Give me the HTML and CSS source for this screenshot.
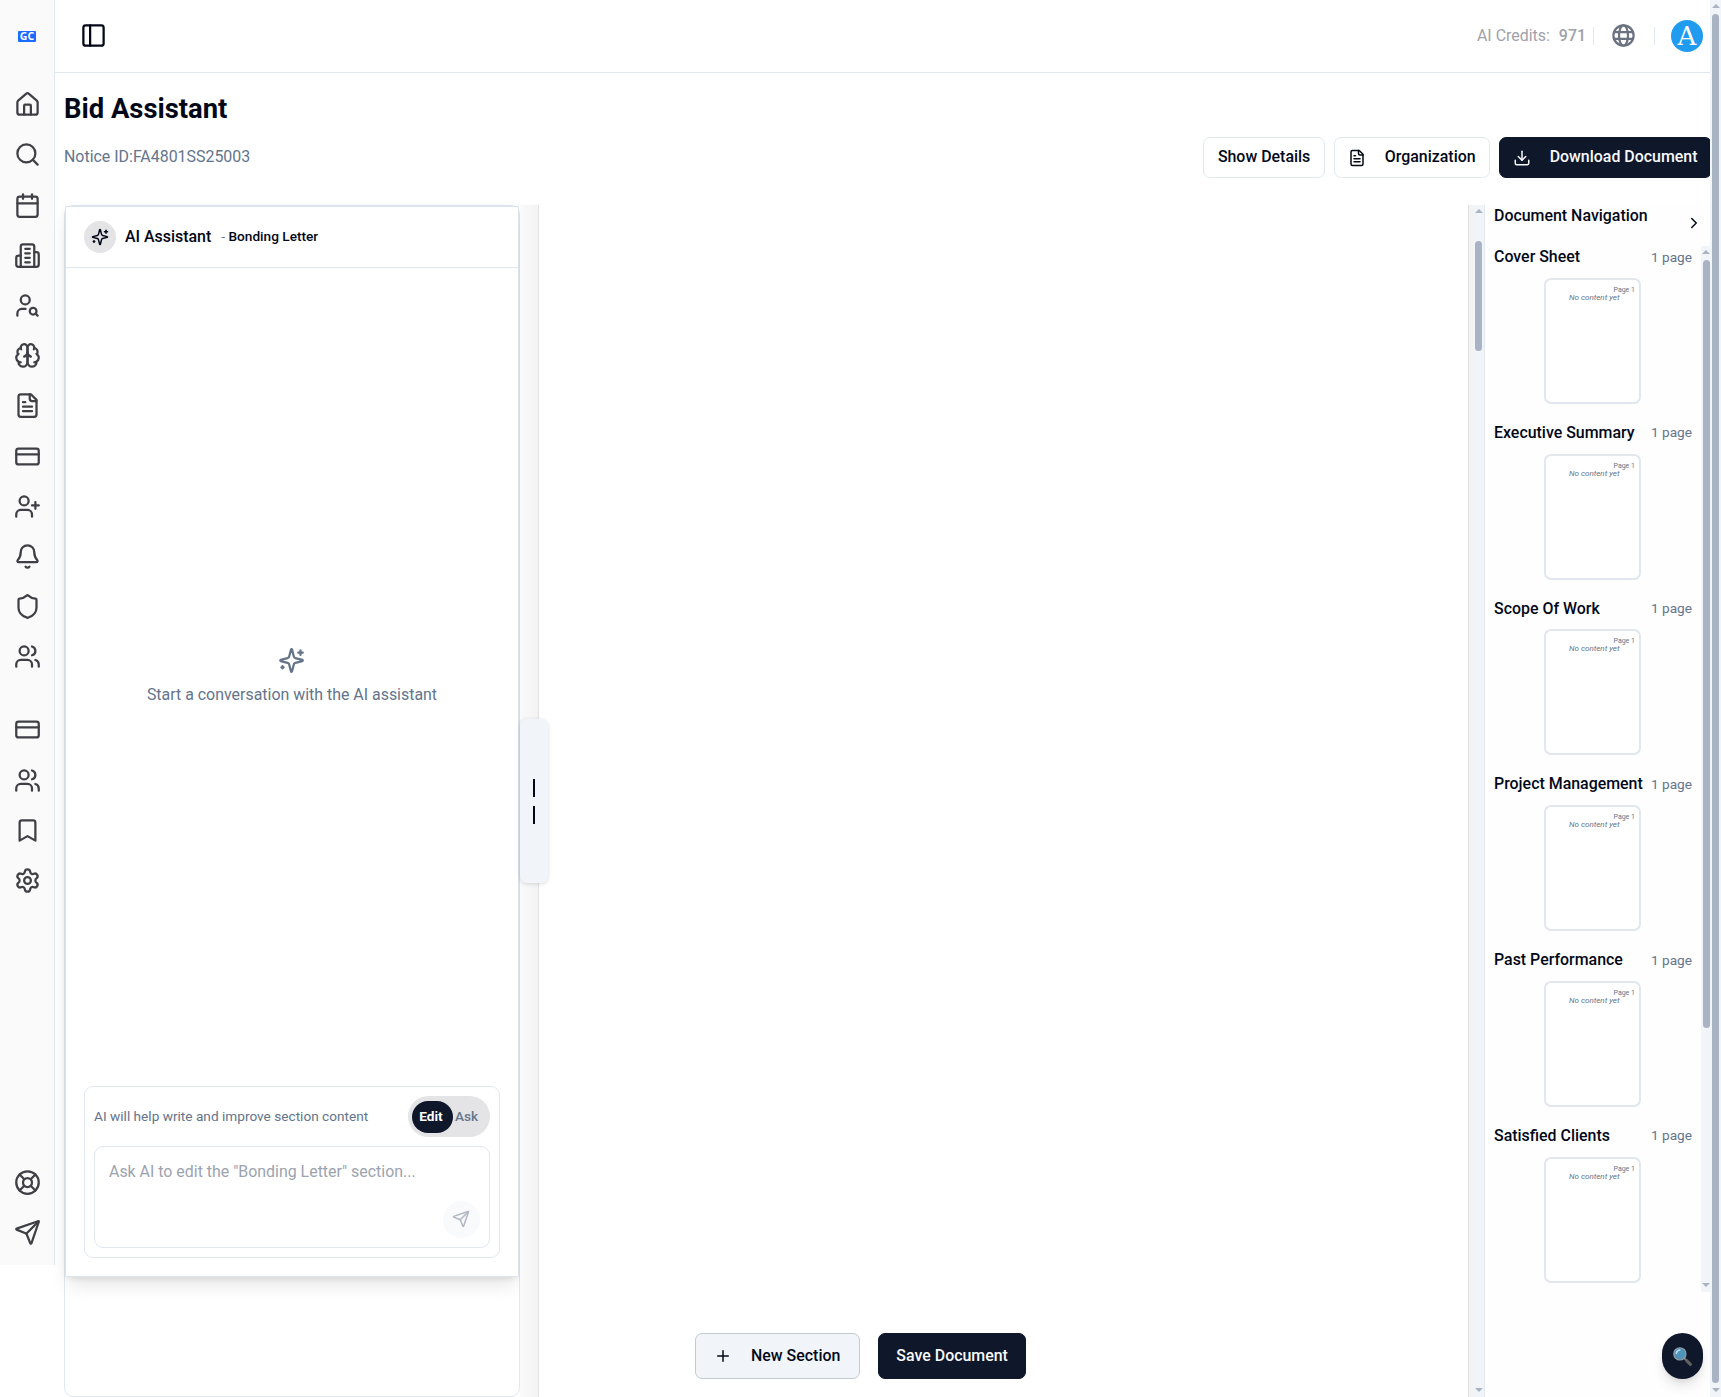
FILE: index.html
```
<!DOCTYPE html>
<html lang="en">
<head>
  <meta charset="UTF-8" />
  <meta name="viewport" content="width=device-width, initial-scale=1.0"/>
  <title>Bid Assistant</title>

  <link rel="stylesheet" href="styles.css">
</head>

<body>
  <!-- Shared icons -->
  <svg class="sprite" xmlns="http://www.w3.org/2000/svg">
    <symbol id="i-card" viewBox="0 0 24 24"><rect width="20" height="14" x="2" y="5" rx="2"/><path d="M2 10h20"/></symbol>
    <symbol id="i-users" viewBox="0 0 24 24"><path d="M16 21v-2a4 4 0 0 0-4-4H6a4 4 0 0 0-4 4v2"/><circle cx="9" cy="7" r="4"/><path d="M22 21v-2a4 4 0 0 0-3-3.87"/><path d="M16 3.13a4 4 0 0 1 0 7.75"/></symbol>
    <symbol id="i-file" viewBox="0 0 24 24"><path d="M15 2H6a2 2 0 0 0-2 2v16a2 2 0 0 0 2 2h12a2 2 0 0 0 2-2V7Z"/><path d="M14 2v4a2 2 0 0 0 2 2h4"/><path d="M10 9H8"/><path d="M16 13H8"/><path d="M16 17H8"/></symbol>
    <symbol id="i-send" viewBox="0 0 24 24"><path d="M14.536 21.686a.5.5 0 0 0 .937-.024l6.5-19a.496.496 0 0 0-.635-.635l-19 6.5a.5.5 0 0 0-.024.937l7.93 3.18a2 2 0 0 1 1.112 1.11z"/><path d="m21.854 2.147-10.94 10.939"/></symbol>
    <symbol id="i-sparkles" viewBox="0 0 24 24"><path d="M9.937 15.5A2 2 0 0 0 8.5 14.063l-6.135-1.582a.5.5 0 0 1 0-.962L8.5 9.936A2 2 0 0 0 9.937 8.5l1.582-6.135a.5.5 0 0 1 .963 0L14.063 8.5A2 2 0 0 0 15.5 9.937l6.135 1.581a.5.5 0 0 1 0 .964L15.5 14.063a2 2 0 0 0-1.437 1.437l-1.582 6.135a.5.5 0 0 1-.963 0z"/><path d="M20 3v4"/><path d="M22 5h-4"/><path d="M4 17v2"/><path d="M5 18H3"/></symbol>
  </svg>

  <aside class="sidebar">
    <div class="logo"><span>GC</span></div>
    <nav class="side-group">
      <a><svg class="icon" viewBox="0 0 24 24"><path d="M15 21v-8a1 1 0 0 0-1-1h-4a1 1 0 0 0-1 1v8"/><path d="M3 10a2 2 0 0 1 .709-1.528l7-5.999a2 2 0 0 1 2.582 0l7 5.999A2 2 0 0 1 21 10v9a2 2 0 0 1-2 2H5a2 2 0 0 1-2-2z"/></svg></a>
      <a><svg class="icon" viewBox="0 0 24 24"><circle cx="11" cy="11" r="8"/><path d="m21 21-4.3-4.3"/></svg></a>
      <a><svg class="icon" viewBox="0 0 24 24"><path d="M8 2v4"/><path d="M16 2v4"/><rect width="18" height="18" x="3" y="4" rx="2"/><path d="M3 10h18"/></svg></a>
      <a><svg class="icon" viewBox="0 0 24 24"><path d="M6 22V4a2 2 0 0 1 2-2h8a2 2 0 0 1 2 2v18Z"/><path d="M6 12H4a2 2 0 0 0-2 2v6a2 2 0 0 0 2 2h2"/><path d="M18 9h2a2 2 0 0 1 2 2v9a2 2 0 0 1-2 2h-2"/><path d="M10 6h4"/><path d="M10 10h4"/><path d="M10 14h4"/><path d="M10 18h4"/></svg></a>
      <a><svg class="icon" viewBox="0 0 24 24"><circle cx="10" cy="7" r="4"/><path d="M10.3 15H7a4 4 0 0 0-4 4v2"/><circle cx="17" cy="17" r="3"/><path d="m21 21-1.9-1.9"/></svg></a>
      <a><svg class="icon" viewBox="0 0 24 24"><path d="M12 5a3 3 0 1 0-5.997.125 4 4 0 0 0-2.526 5.77 4 4 0 0 0 .556 6.588A4 4 0 1 0 12 18Z"/><path d="M12 5a3 3 0 1 1 5.997.125 4 4 0 0 1 2.526 5.77 4 4 0 0 1-.556 6.588A4 4 0 1 1 12 18Z"/><path d="M15 13a4.5 4.5 0 0 1-3-4 4.5 4.5 0 0 1-3 4"/><path d="M17.599 6.5a3 3 0 0 0 .399-1.375"/><path d="M6.003 5.125A3 3 0 0 0 6.401 6.5"/><path d="M3.477 10.896a4 4 0 0 1 .585-.396"/><path d="M19.938 10.5a4 4 0 0 1 .585.396"/><path d="M6 18a4 4 0 0 1-1.967-.516"/><path d="M19.967 17.484A4 4 0 0 1 18 18"/></svg></a>
      <a><svg class="icon"><use href="#i-file"/></svg></a>
      <a><svg class="icon"><use href="#i-card"/></svg></a>
      <a><svg class="icon" viewBox="0 0 24 24"><path d="M16 21v-2a4 4 0 0 0-4-4H6a4 4 0 0 0-4 4v2"/><circle cx="9" cy="7" r="4"/><path d="M19 8v6"/><path d="M22 11h-6"/></svg></a>
      <a><svg class="icon" viewBox="0 0 24 24"><path d="M10.268 21a2 2 0 0 0 3.464 0"/><path d="M3.262 15.326A1 1 0 0 0 4 17h16a1 1 0 0 0 .74-1.673C19.41 13.956 18 12.499 18 8A6 6 0 0 0 6 8c0 4.499-1.411 5.956-2.738 7.326"/></svg></a>
      <a><svg class="icon" viewBox="0 0 24 24"><path d="M20 13c0 5-3.5 7.5-7.66 8.95a1 1 0 0 1-.67-.01C7.5 20.5 4 18 4 13V6a1 1 0 0 1 1-1c2 0 4.5-1.2 6.24-2.72a1.17 1.17 0 0 1 1.52 0C14.51 3.81 17 5 19 5a1 1 0 0 1 1 1z"/></svg></a>
      <a><svg class="icon"><use href="#i-users"/></svg></a>
    </nav>
    <nav class="side-group side-second">
      <a><svg class="icon"><use href="#i-card"/></svg></a>
      <a><svg class="icon"><use href="#i-users"/></svg></a>
      <a><svg class="icon" viewBox="0 0 24 24"><path d="m19 21-7-4-7 4V5a2 2 0 0 1 2-2h10a2 2 0 0 1 2 2v16z"/></svg></a>
      <a><svg class="icon" viewBox="0 0 24 24"><path d="M9.671 4.136a2.34 2.34 0 0 1 4.659 0 2.34 2.34 0 0 0 3.319 1.915 2.34 2.34 0 0 1 2.33 4.033 2.34 2.34 0 0 0 0 3.831 2.34 2.34 0 0 1-2.33 4.033 2.34 2.34 0 0 0-3.319 1.915 2.34 2.34 0 0 1-4.659 0 2.34 2.34 0 0 0-3.32-1.915 2.34 2.34 0 0 1-2.33-4.033 2.34 2.34 0 0 0 0-3.831A2.34 2.34 0 0 1 6.35 6.051a2.34 2.34 0 0 0 3.319-1.915"/><circle cx="12" cy="12" r="3"/></svg></a>
    </nav>
    <nav class="side-group side-bottom">
      <a><svg class="icon" viewBox="0 0 24 24"><circle cx="12" cy="12" r="10"/><path d="m4.93 4.93 4.24 4.24"/><path d="m14.83 9.17 4.24-4.24"/><path d="m14.83 14.83 4.24 4.24"/><path d="m9.17 14.83-4.24 4.24"/><circle cx="12" cy="12" r="4"/></svg></a>
      <a><svg class="icon"><use href="#i-send"/></svg></a>
    </nav>
  </aside>

  <main class="main">
    <header class="topbar">
      <svg class="icon" viewBox="0 0 24 24"><rect width="18" height="18" x="3" y="3" rx="2"/><path d="M9 3v18"/></svg>
      <div class="topbar-right">
        <span class="credits">AI Credits:</span>
        <span class="credits credits-value">971</span>
        <span class="divider"></span>
        <svg class="icon globe" viewBox="0 0 24 24"><circle cx="12" cy="12" r="9"/><path d="M3.6 9h16.8"/><path d="M3.6 15h16.8"/><ellipse cx="12" cy="12" rx="4" ry="9"/></svg>
        <span class="divider"></span>
        <span class="avatar">A</span>
      </div>
    </header>

    <section class="page-head">
      <h1>Bid Assistant</h1>
      <div class="head-row">
        <p>Notice ID:FA4801SS25003</p>
        <div class="actions">
          <button class="btn">Show Details</button>
          <button class="btn btn-icon"><svg class="icon-sm"><use href="#i-file"/></svg>Organization</button>
          <button class="btn btn-icon btn-dark"><svg class="icon-sm" viewBox="0 0 24 24"><path d="M21 15v4a2 2 0 0 1-2 2H5a2 2 0 0 1-2-2v-4"/><path d="m7 10 5 5 5-5"/><path d="M12 15V3"/></svg>Download Document</button>
        </div>
      </div>
    </section>

    <section class="workspace">
      <div class="chat-wrap">
        <div class="chat">
          <div class="chat-head">
            <span class="chat-badge"><svg class="icon-sm"><use href="#i-sparkles"/></svg></span>
            <span class="chat-title">AI Assistant</span>
            <span class="chat-section"><i>-</i> Bonding Letter</span>
          </div>
          <div class="chat-empty">
            <svg class="icon"><use href="#i-sparkles"/></svg>
            <p>Start a conversation with the AI assistant</p>
          </div>
          <form class="prompt">
            <div class="prompt-top">
              <span>AI will help write and improve section content</span>
              <div class="toggle"><b>Edit</b><span>Ask</span></div>
            </div>
            <div class="prompt-box">
              <span class="placeholder">Ask AI to edit the "Bonding Letter" section...</span>
              <span class="send"><svg class="icon-sm"><use href="#i-send"/></svg></span>
            </div>
          </form>
        </div>
      </div>

      <div class="gutter">
        <div class="handle"><span></span><span></span></div>
      </div>

      <div class="editor">
        <div class="editor-actions">
          <button class="btn btn-lg btn-soft"><svg class="icon-sm" viewBox="0 0 24 24"><path d="M5 12h14"/><path d="M12 5v14"/></svg>New Section</button>
          <button class="btn btn-lg btn-dark">Save Document</button>
        </div>
      </div>
      <div class="editor-edge"></div>
      <div class="scroll scroll-editor"><i class="up"></i><span class="thumb"></span><i class="down"></i></div>

      <aside class="docnav">
        <div class="docnav-head">
          <h2>Document Navigation</h2>
          <svg class="icon-sm" viewBox="0 0 24 24"><path d="m9 18 6-6-6-6"/></svg>
        </div>
        <div class="docnav-body">
          <div class="doc-list">
            <div class="doc"><div class="doc-row"><h3>Cover Sheet</h3><span>1 page</span></div><div class="sheet"><small>Page 1</small><em>No content yet</em></div></div>
            <div class="doc"><div class="doc-row"><h3>Executive Summary</h3><span>1 page</span></div><div class="sheet"><small>Page 1</small><em>No content yet</em></div></div>
            <div class="doc"><div class="doc-row"><h3>Scope Of Work</h3><span>1 page</span></div><div class="sheet"><small>Page 1</small><em>No content yet</em></div></div>
            <div class="doc"><div class="doc-row"><h3>Project Management</h3><span>1 page</span></div><div class="sheet"><small>Page 1</small><em>No content yet</em></div></div>
            <div class="doc"><div class="doc-row"><h3>Past Performance</h3><span>1 page</span></div><div class="sheet"><small>Page 1</small><em>No content yet</em></div></div>
            <div class="doc"><div class="doc-row"><h3>Satisfied Clients</h3><span>1 page</span></div><div class="sheet"><small>Page 1</small><em>No content yet</em></div></div>
          </div>
          <div class="scroll scroll-docs"><i class="up"></i><span class="thumb"></span><i class="down"></i></div>
        </div>
      </aside>
    </section>
  </main>

  <div class="scroll scroll-page"><i class="up"></i><span class="thumb"></span><i class="down"></i></div>

  <button class="fab">
    <svg viewBox="0 0 24 24">
      <path d="M14 14l2.5 2.5" stroke="#9aa0a6" stroke-width="2"/>
      <path d="M16.500 16.500l4.500 4.500" stroke="#5f6062" stroke-width="3.500" stroke-linecap="round"/>
      <circle cx="9" cy="9" r="7" fill="#4f93b8" stroke="#8f9aa3" stroke-width="1.4"/>
      <path d="M5 8.500a4.500 4.500 0 0 1 4-4" fill="none" stroke="#b9def0" stroke-width="1.800" stroke-linecap="round"/>
    </svg>
  </button>
</body>
</html>
```
FILE: styles.css
```
* {
  box-sizing: border-box;
}

body {
  font-family: Roboto, "Liberation Sans", sans-serif;
  font-size: 15.93px;
  line-height: 22.5px;
  color: #020817;
  background: white;
  margin: 0;
  height: 1397px;
  display: flex;
  align-items: flex-start;
  overflow: hidden;
}

h1, h2, h3, p {
  margin: 0;
}

button {
  font: inherit;
}

svg {
  display: block;
  flex-shrink: 0;
}

.sprite {
  position: absolute;
  width: 0;
  height: 0;
}

.icon,
.icon-sm {
  width: 27px;
  height: 27px;
  fill: none;
  stroke: currentColor;
  stroke-width: 2;
  stroke-linecap: round;
  stroke-linejoin: round;
}

.icon-sm {
  width: 18px;
  height: 18px;
}

/* Sidebar */
.sidebar {
  width: 55px;
  height: 1265px;
  flex-shrink: 0;
  display: flex;
  flex-direction: column;
  background: #fafafa;
  border-right: 1px solid #e2e8f0;
  color: #3f3f46;
  padding-bottom: 7.6px;
}

.logo {
  height: 79.6px;
  padding: 31px 0 0 18px;
}

.logo span {
  display: block;
  width: 18px;
  height: 11px;
  border-radius: 1px;
  background: #1a6bff;
  color: white;
  font: bold 10.5px/11px "Noto Sans", sans-serif;
  text-align: center;
}

.side-group a {
  height: 50.2px;
  display: flex;
  align-items: center;
  padding-left: 14px;
}

.side-second {
  margin-top: 23px;
}

.side-bottom {
  margin-top: auto;
}

/* Header */
.main {
  flex: 1;
  min-width: 0;
  height: 1397px;
  display: flex;
  flex-direction: column;
}

.topbar {
  height: 73px;
  flex-shrink: 0;
  display: flex;
  align-items: center;
  justify-content: space-between;
  border-bottom: 1px solid #e2e8f0;
  padding: 0 7px 1px 25px;
}

.topbar-right {
  display: flex;
  align-items: center;
  color: #a1a1aa;
}

.credits {
  padding-top: 2px;
}

.credits-value {
  margin: 0 7px 0 9px;
  font-weight: 500;
}

.divider {
  width: 1px;
  height: 18px;
  background: #e2e8f0;
}

.globe {
  margin: 0 17px 0 16px;
  color: #6b7280;
}

.avatar {
  width: 32px;
  height: 32px;
  margin-left: 16px;
  border-radius: 50%;
  background: #1f9bf0;
  color: white;
  font: 26px/33px "DejaVu Serif", serif;
  text-align: center;
}

.page-head {
  padding-left: 9px;
  height: 132px;
  flex-shrink: 0;
}

h1 {
  font-size: 27.4px;
  line-height: 36px;
  font-weight: 700;
  padding-top: 18px;
}

.head-row {
  display: flex;
  align-items: center;
  justify-content: space-between;
  margin-top: 10px;
  margin-right: -2px;
  color: #64748b;
}

.actions {
  display: flex;
  gap: 9px;
}

.btn {
  height: 41px;
  display: flex;
  align-items: center;
  gap: 18px;
  padding: 0 14px;
  border: 1px solid #e2e8f0;
  border-radius: 7px;
  background: white;
  color: #020817;
  font-weight: 500;
  white-space: nowrap;
}

.btn-icon {
  gap: 19px;
  padding: 0 13.5px 0 12.5px;
}

.btn-dark {
  background: #0f172a;
  border-color: #0f172a;
  color: #f8fafc;
}

.btn-lg {
  height: 46px;
  padding: 0 17px;
}

.btn-soft {
  padding: 0 19px 0 18px;
  gap: 19px;
  background: #f1f5f9;
  border-color: #c4cad3;
}

/* Workspace */
.workspace {
  flex: 1;
  min-height: 0;
  display: flex;
  padding-left: 9px;
}

.chat-wrap {
  width: 456px;
  flex-shrink: 0;
  border: 1px solid #e2e8f0;
  border-radius: 9px;
}

.chat {
  height: 1071px;
  display: flex;
  flex-direction: column;
  background: white;
  border: 1px solid #dce4ed;
  box-shadow: 0 11px 17px -3px rgba(0,0,0,0.1), 0 4px 7px -4px rgba(0,0,0,0.1), 0 0 10px rgba(0,0,0,0.04);
}

.chat-head {
  height: 61px;
  display: flex;
  align-items: center;
  padding-left: 18px;
  border-bottom: 1px solid #e2e8f0;
  font-weight: 500;
}

.chat-badge {
  width: 32px;
  height: 32px;
  display: flex;
  align-items: center;
  justify-content: center;
  border-radius: 50%;
  background: #e4e4e7;
  margin-right: 9px;
}

.chat-section {
  margin-left: 10px;
  padding-bottom: 2px;
  font-size: 13.65px;
}

.chat-section i {
  font-style: normal;
  font-weight: 400;
  color: #64748b;
}

.chat-empty {
  flex: 1;
  display: flex;
  flex-direction: column;
  align-items: center;
  justify-content: center;
  gap: 10px;
  color: #64748b;
}

.chat-empty .icon {
  margin-right: 1px;
}

.prompt {
  height: 172px;
  margin: 0 18px 18px;
  padding: 9px;
  border: 1px solid #e2e8f0;
  border-radius: 9px;
}

.prompt-top {
  display: flex;
  align-items: center;
  justify-content: space-between;
  font-size: 13.65px;
  color: #64748b;
}

.toggle {
  width: 82px;
  height: 41px;
  display: flex;
  align-items: center;
  gap: 2px;
  padding-left: 4px;
  border-radius: 21px;
  background: #e4e4e7;
  font-weight: 500;
}

.toggle b {
  width: 41px;
  height: 32px;
  line-height: 31px;
  border-radius: 16px;
  background: #0f172a;
  color: white;
  font-weight: 700;
  text-align: center;
  padding-right: 3px;
}

.prompt-box {
  height: 102px;
  margin-top: 9px;
  padding: 14px 9.5px 9.5px 14px;
  display: flex;
  flex-direction: column;
  justify-content: space-between;
  border: 1px solid #e2e8f0;
  border-radius: 9px;
  color: #9ca3af;
}

.send {
  width: 37px;
  height: 37px;
  align-self: flex-end;
  display: flex;
  align-items: center;
  justify-content: center;
  border-radius: 50%;
  background: #f8fafc;
  color: #b1b8c4;
}

/* Resizer between chat and editor */
.gutter {
  position: relative;
  width: 19px;
  flex-shrink: 0;
  background: linear-gradient(to right, #fafafa, #f3f3f3);
  border-right: 1px solid #e3e3e3;
}

.handle {
  position: absolute;
  top: 514px;
  left: 0;
  width: 28px;
  height: 164px;
  display: flex;
  flex-direction: column;
  align-items: center;
  justify-content: center;
  gap: 9px;
  border-radius: 7px;
  background: #f1f5f9;
  box-shadow: 0 1px 4px rgba(0,0,0,0.15);
}

.handle span {
  width: 2px;
  height: 18px;
  background: #020817;
}

.editor {
  flex: 1;
  display: flex;
  align-items: flex-end;
  padding: 0 0 18px 156px;
}

.editor-actions {
  display: flex;
  gap: 18px;
}

.editor-edge {
  width: 5px;
  background: #f3f3f3;
  border-left: 1px solid #e2e2e2;
}

/* Scrollbars */
.scroll {
  width: 11px;
  flex-shrink: 0;
  display: flex;
  flex-direction: column;
  align-items: center;
  background: #f1f5f9;
}

.scroll i {
  border: 4px solid transparent;
}

.scroll .up {
  border-top: 0;
  border-bottom-color: #a8b3c4;
  margin-top: 4px;
}

.scroll .down {
  border-bottom: 0;
  border-top-color: #a8b3c4;
  margin: auto 0 5px;
}

.thumb {
  width: 7px;
  border-radius: 4px;
  background: #a8b3c4;
}

.scroll-editor .thumb {
  height: 110px;
  margin-top: 28px;
}

.scroll-docs {
  width: 9px;
  height: 1046px;
  align-items: flex-end;
}

.scroll-docs .thumb {
  height: 768px;
  margin-top: 6px;
}

.scroll-page {
  height: 1397px;
}

.scroll-page .thumb {
  height: 1369px;
  margin-top: 6px;
}

/* Document navigation */
.docnav {
  width: 226px;
  flex-shrink: 0;
  border-left: 1px solid #e2e8f0;
  background: #fefefe;
}

.docnav-head {
  height: 41px;
  display: flex;
  justify-content: space-between;
  padding-left: 9px;
  padding-right: 7px;
}

.docnav-head svg {
  margin-top: 9px;
}

h2, h3 {
  font-size: 15.93px;
  line-height: 22.5px;
  font-weight: 500;
}

.docnav-body {
  display: flex;
}

.doc-list {
  flex: 1;
  padding: 0 9px;
}

.doc {
  height: 175.8px;
}

.doc-row {
  height: 22.5px;
  display: flex;
  align-items: center;
  justify-content: space-between;
  white-space: nowrap;
}

.doc-row span {
  padding-bottom: 1px;
  font-size: 13.65px;
  color: #64748b;
}

.sheet {
  width: 97px;
  height: 126px;
  margin: 9.3px 0 0 50px;
  padding: 7px 4px 5px 5px;
  border: 2px solid #e2e6ed;
  border-radius: 7px;
  background: white;
  color: #64748b;
  font-size: 8px;
  line-height: 8px;
  display: flex;
  flex-direction: column;
}

.sheet small {
  font-size: 7px;
  line-height: 7px;
  align-self: flex-end;
}

.sheet em {
  padding-left: 18px;
}

.fab {
  position: absolute;
  left: 1662px;
  top: 1333px;
  width: 41px;
  height: 46px;
  display: flex;
  align-items: center;
  justify-content: center;
  padding: 0;
  border: none;
  border-radius: 23px;
  background: #0f172a;
  box-shadow: 0 9px 14px -3px rgba(0,0,0,0.12), 0 3px 6px -2px rgba(0,0,0,0.1);
}

.fab svg {
  width: 21px;
  height: 21px;
}
```
